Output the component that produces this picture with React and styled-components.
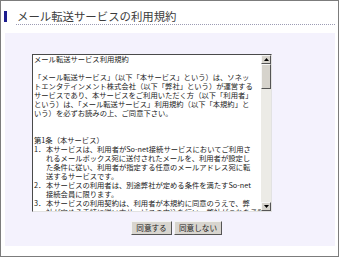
import React from 'react';
import styled, { createGlobalStyle } from 'styled-components';

const GlobalStyle = createGlobalStyle`
  html, body {
    margin: 0;
    padding: 0;
    background: #ffffff;
  }
  body {
    font-family: "Noto Sans CJK JP", "Noto Sans", sans-serif;
  }
`;

const Frame = styled.div`
  width: 339px;
  height: 257px;
  box-sizing: border-box;
  border: 1px solid #7c7c7c;
  background: #ffffff;
  display: flex;
  flex-direction: column;
`;

const TitleRow = styled.div`
  display: flex;
  align-items: center;
  height: 13px;
  margin-top: 9px;
  padding-left: 3px;
`;

const TitleBar = styled.span`
  width: 3px;
  height: 11px;
  background: #1d1d8f;
`;

const Title = styled.h1`
  margin: 0 0 0 10px;
  font-size: 11.4px;
  font-weight: normal;
  line-height: 13px;
  color: #3c3c3c;
  letter-spacing: 0;
`;

const Rule = styled.div`
  margin: 1px 3px 0 15px;
  border-bottom: 1px dotted #9c9cb4;
`;

const Panel = styled.section`
  width: 330px;
  height: 213px;
  margin: 8px 0 0 4px;
  box-sizing: border-box;
  background: #f4f2fd;
  padding: 21px 0 0 27px;
  display: flex;
  flex-direction: column;
`;

const TermsBox = styled.div`
  width: 240px;
  height: 158px;
  box-sizing: border-box;
  border: 1px solid;
  border-color: #4a4a4a #e2e2e2 #e2e2e2 #4a4a4a;
  background: #ffffff;
  display: flex;
  overflow: hidden;
`;

const TermsText = styled.div`
  flex: 1;
  overflow: hidden;
  padding: 0 0 0 1px;
  font-size: 7.3px;
  line-height: 9px;
  color: #1a1a1a;
`;

const Line = styled.div`
  white-space: nowrap;
  height: 9px;
`;

const Item = styled.div`
  display: flex;
  white-space: nowrap;
`;

const Num = styled.span`
  width: 12px;
  flex: none;
`;

const Scrollbar = styled.div`
  width: 10px;
  flex: none;
  display: flex;
  flex-direction: column;
  background: #ecebe6;
`;

const ScrollButton = styled.div`
  height: 9px;
  box-sizing: border-box;
  background: #d6d3cc;
  border: 1px solid;
  border-color: #f6f6f6 #555555 #555555 #f6f6f6;
  display: flex;
  align-items: center;
  justify-content: center;
`;

const Thumb = styled.div`
  height: 25px;
  box-sizing: border-box;
  background: #d6d3cc;
  border: 1px solid;
  border-color: #f6f6f6 #555555 #555555 #f6f6f6;
`;

const Track = styled.div`
  flex: 1;
`;

const Arrow = ({ down }) => (
  <svg width="5" height="3" viewBox="0 0 5 3">
    <path d={down ? 'M0 0 H5 L2.5 3 Z' : 'M0 3 H5 L2.5 0 Z'} fill="#000" />
  </svg>
);

const ButtonRow = styled.div`
  display: flex;
  gap: 2px;
  margin-top: 9px;
  padding-left: 99px;
`;

const Button = styled.button`
  height: 14px;
  padding: 0;
  margin: 0;
  box-sizing: border-box;
  background: #d8d5cf;
  border: 1px solid;
  border-color: #f4f4f4 #555555 #555555 #f4f4f4;
  font-family: "Noto Sans CJK JP", sans-serif;
  font-size: 7.6px;
  line-height: 12px;
  white-space: nowrap;
  color: #1a1a1a;
  width: ${(p) => p.$w}px;
`;

export default function App() {
  return (
    <>
      <GlobalStyle />
      <Frame>
        <TitleRow>
          <TitleBar />
          <Title>メール転送サービスの利用規約</Title>
        </TitleRow>
        <Rule />
        <Panel>
          <TermsBox>
            <TermsText>
              <Line>メール転送サービス利用規約</Line>
              <Line />
              <Line>「メール転送サービス」（以下「本サービス」という）は、ソネッ</Line>
              <Line>トエンタテインメント株式会社（以下「弊社」という）が運営する</Line>
              <Line>サービスであり、本サービスをご利用いただく方（以下「利用者」</Line>
              <Line>という）は、「メール転送サービス」利用規約（以下「本規約」と</Line>
              <Line>いう）を必ずお読みの上、ご同意下さい。</Line>
              <Line />
              <Line />
              <Line>第1条（本サービス）</Line>
              <Item>
                <Num>1．</Num>
                <div>
                  本サービスは、利用者がSo-net接続サービスにおいてご利用さ
                  <br />
                  れるメールボックス宛に送付されたメールを、利用者が設定し
                  <br />
                  た条件に従い、利用者が指定する任意のメールアドレス宛に転
                  <br />
                  送するサービスです。
                </div>
              </Item>
              <Item>
                <Num>2．</Num>
                <div>
                  本サービスの利用者は、別途弊社が定める条件を満たすSo-net
                  <br />
                  接続会員に限ります。
                </div>
              </Item>
              <Item>
                <Num>3．</Num>
                <div>
                  本サービスの利用契約は、利用者が本規約に同意のうえで、弊
                  <br />
                  社が定める手続に従い本サービスの申込を行い、弊社がこれを承諾
                </div>
              </Item>
            </TermsText>
            <Scrollbar>
              <ScrollButton>
                <Arrow />
              </ScrollButton>
              <Thumb />
              <Track />
              <ScrollButton>
                <Arrow down />
              </ScrollButton>
            </Scrollbar>
          </TermsBox>
          <ButtonRow>
            <Button $w={41}>同意する</Button>
            <Button $w={48}>同意しない</Button>
          </ButtonRow>
        </Panel>
      </Frame>
    </>
  );
}
